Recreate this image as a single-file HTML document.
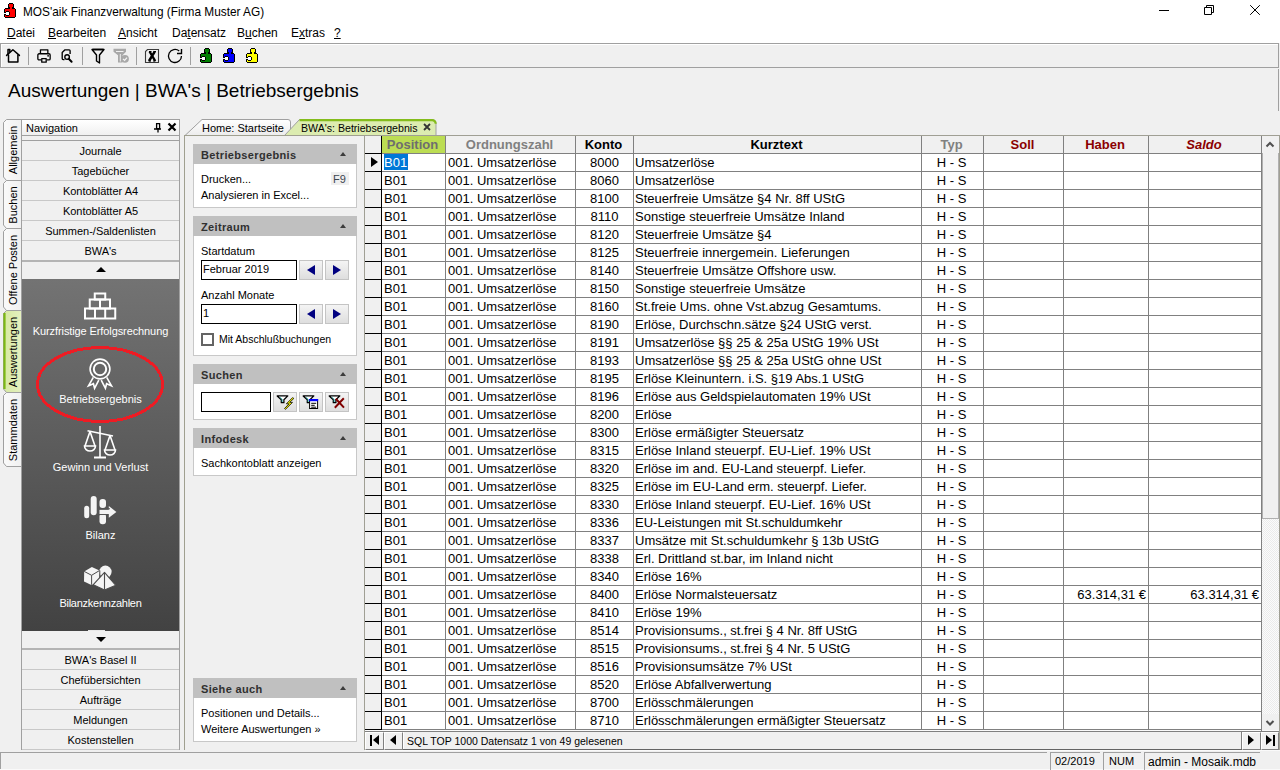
<!DOCTYPE html><html><head><meta charset="utf-8"><style>
*{margin:0;padding:0;box-sizing:border-box}
html,body{width:1280px;height:770px;overflow:hidden;background:#f0f0f0;font-family:"Liberation Sans",sans-serif;color:#000}
.a{position:absolute}
.t{position:absolute;white-space:nowrap;line-height:1}
.u{text-decoration:underline;text-underline-offset:1px}
.ni{position:absolute;left:22px;width:157px;height:20px;border-bottom:1px solid #c8c8c8;font-size:11px;text-align:center;line-height:21px;color:#000}
.lbl{position:absolute;left:22px;width:157px;text-align:center;font-size:11px;color:#fff;white-space:nowrap;line-height:1}
.tph{position:absolute;left:193px;width:164px;height:20px;background:#c0c0c0}
.tph b{position:absolute;left:8px;top:6px;font-size:11px;letter-spacing:0.35px;color:#303030;line-height:1}
.tph i{position:absolute;left:147px;top:8px;width:0;height:0;border-left:3px solid transparent;border-right:3px solid transparent;border-bottom:4px solid #3c3c3c}
.tpb{position:absolute;left:193px;width:164px;background:#fff;border:1px solid #c8c8c8;border-top:none}
.tpt{position:absolute;font-size:11px;white-space:nowrap;line-height:1;color:#000}
.inp{position:absolute;background:#fff;border:1px solid #000}
.btn{position:absolute;width:24px;height:20px;border:1px solid #c4c4c4;background:linear-gradient(#f4f4f4,#dedede)}
.gl{position:absolute;background:#808080}
.gt{position:absolute;font-size:13px;white-space:nowrap;line-height:1}
.gh{position:absolute;font-size:13px;font-weight:bold;white-space:nowrap;line-height:1;text-align:center}
.sp{position:absolute;top:752px;height:18px;border-left:1px solid #a0a0a0;border-top:1px solid #a0a0a0;font-size:12px;line-height:1;white-space:nowrap}
</style></head><body>
<div class="a" style="left:0;top:0;width:1280px;height:43px;background:#fff"></div>
<svg class="a" style="left:4px;top:3px" width="12" height="15" viewBox="0 0 12 15" shape-rendering="crispEdges"><rect x="5" y="0" width="4" height="1" fill="#000"/><rect x="4" y="1" width="1" height="1" fill="#000"/><rect x="5" y="1" width="4" height="1" fill="#f00"/><rect x="9" y="1" width="1" height="1" fill="#000"/><rect x="4" y="2" width="1" height="1" fill="#000"/><rect x="5" y="2" width="4" height="1" fill="#f00"/><rect x="9" y="2" width="1" height="1" fill="#000"/><rect x="4" y="3" width="1" height="1" fill="#000"/><rect x="5" y="3" width="4" height="1" fill="#f00"/><rect x="9" y="3" width="1" height="1" fill="#000"/><rect x="4" y="4" width="2" height="1" fill="#000"/><rect x="6" y="4" width="2" height="1" fill="#f00"/><rect x="8" y="4" width="2" height="1" fill="#000"/><rect x="1" y="5" width="5" height="1" fill="#000"/><rect x="6" y="5" width="2" height="1" fill="#f00"/><rect x="8" y="5" width="3" height="1" fill="#000"/><rect x="0" y="6" width="1" height="1" fill="#000"/><rect x="1" y="6" width="10" height="1" fill="#f00"/><rect x="11" y="6" width="1" height="1" fill="#000"/><rect x="0" y="7" width="1" height="1" fill="#000"/><rect x="1" y="7" width="10" height="1" fill="#f00"/><rect x="11" y="7" width="1" height="1" fill="#000"/><rect x="0" y="8" width="1" height="1" fill="#000"/><rect x="1" y="8" width="1" height="1" fill="#f00"/><rect x="2" y="8" width="3" height="1" fill="#000"/><rect x="5" y="8" width="6" height="1" fill="#f00"/><rect x="11" y="8" width="1" height="1" fill="#000"/><rect x="0" y="9" width="2" height="1" fill="#000"/><rect x="2" y="9" width="3" height="1" fill="#fff"/><rect x="5" y="9" width="1" height="1" fill="#000"/><rect x="6" y="9" width="5" height="1" fill="#f00"/><rect x="11" y="9" width="1" height="1" fill="#000"/><rect x="2" y="10" width="3" height="1" fill="#fff"/><rect x="5" y="10" width="1" height="1" fill="#000"/><rect x="6" y="10" width="5" height="1" fill="#f00"/><rect x="11" y="10" width="1" height="1" fill="#000"/><rect x="0" y="11" width="2" height="1" fill="#000"/><rect x="2" y="11" width="3" height="1" fill="#fff"/><rect x="5" y="11" width="1" height="1" fill="#000"/><rect x="6" y="11" width="5" height="1" fill="#f00"/><rect x="11" y="11" width="1" height="1" fill="#000"/><rect x="0" y="12" width="1" height="1" fill="#000"/><rect x="1" y="12" width="1" height="1" fill="#f00"/><rect x="2" y="12" width="3" height="1" fill="#000"/><rect x="5" y="12" width="6" height="1" fill="#f00"/><rect x="11" y="12" width="1" height="1" fill="#000"/><rect x="0" y="13" width="1" height="1" fill="#000"/><rect x="1" y="13" width="10" height="1" fill="#f00"/><rect x="11" y="13" width="1" height="1" fill="#000"/><rect x="1" y="14" width="10" height="1" fill="#000"/></svg>
<div class="t" style="left:23px;top:7px;font-size:11.85px;color:#000">MOS'aik Finanzverwaltung (Firma Muster AG)</div>
<div class="t" style="left:7px;top:27px;font-size:12px"><span class=u>D</span>atei</div>
<div class="t" style="left:48px;top:27px;font-size:12px"><span class=u>B</span>earbeiten</div>
<div class="t" style="left:118px;top:27px;font-size:12px"><span class=u>A</span>nsicht</div>
<div class="t" style="left:172px;top:27px;font-size:12px">Da<span class=u>t</span>ensatz</div>
<div class="t" style="left:237px;top:27px;font-size:12px">B<span class=u>u</span>chen</div>
<div class="t" style="left:291px;top:27px;font-size:12px">E<span class=u>x</span>tras</div>
<div class="t" style="left:334px;top:27px;font-size:12px"><span class=u>?</span></div>
<div class="a" style="left:1159px;top:10px;width:10px;height:1px;background:#000"></div>
<svg class="a" style="left:1202px;top:3px" width="14" height="14" viewBox="0 0 14 14"><path d="M2.5 4.5h7v7h-7z M4.5 4.5v-2h7v7h-2" fill="none" stroke="#000" stroke-width="1"/></svg>
<svg class="a" style="left:1248px;top:3px" width="14" height="14" viewBox="0 0 14 14"><path d="M2.2 2.2l9.6 9.6M11.8 2.2l-9.6 9.6" fill="none" stroke="#000" stroke-width="1"/></svg>
<div class="a" style="left:0;top:43px;width:1279px;height:25px;border:1px solid #a0a0a0;background:#f0f0f0;box-shadow:inset 1px 1px 0 #fff"></div>
<div class="a" style="left:1278px;top:69px;width:1px;height:42px;background:#a0a0a0"></div>
<div class="a" style="left:28px;top:47px;width:1px;height:18px;background:#a0a0a0"></div>
<div class="a" style="left:82px;top:47px;width:1px;height:18px;background:#a0a0a0"></div>
<div class="a" style="left:136px;top:47px;width:1px;height:18px;background:#a0a0a0"></div>
<div class="a" style="left:190px;top:47px;width:1px;height:18px;background:#a0a0a0"></div>
<svg class="a" style="left:5px;top:48px" width="17" height="16" viewBox="0 0 17 16"><g fill="none" stroke="#000" stroke-width="1.5" stroke-linejoin="round" stroke-linecap="round"><path d="M1.6 7.4L7.9 1.8L14.4 7.4"/><path d="M3.5 7v7h9.4v-7"/><path d="M3 6V1.4h1.8v2.1"/></g></svg>
<svg class="a" style="left:36px;top:48px" width="16" height="16" viewBox="0 0 16 16"><g fill="none" stroke="#000" stroke-width="1.3" stroke-linejoin="round"><path d="M4.45 5V1.85h7.4V5"/><path d="M5 11.85H3.05a1.2 1.2 0 0 1-1.2-1.2V6.95a1.2 1.2 0 0 1 1.2-1.2h9.9a1.2 1.2 0 0 1 1.2 1.2v3.7a1.2 1.2 0 0 1-1.2 1.2H11"/><path d="M5.75 10.6h4.45v3.6h-4.45z"/></g><circle cx="12.1" cy="7.8" r="0.9" fill="#000"/></svg>
<svg class="a" style="left:60px;top:48px" width="14" height="16" viewBox="0 0 14 16"><g fill="none" stroke="#000" stroke-width="1.35" stroke-linejoin="round"><path d="M4.5 11.6H3.2a1 1 0 0 1-1-1V4.6L5 1.8h4.1a1 1 0 0 1 1 1V6"/><circle cx="7.1" cy="9" r="2.3"/></g><path d="M8.7 10.8l2.9 2.9" stroke="#000" stroke-width="2" stroke-linecap="round"/></svg>
<svg class="a" style="left:91px;top:48px" width="14" height="16" viewBox="0 0 14 16"><path d="M1 1.5h12l-4.5 5.5v8l-3 -2v-6z" fill="none" stroke="#000" stroke-width="1.4" stroke-linejoin="round"/><path d="M1.5 1.5h11" stroke="#000" stroke-width="1.6"/></svg>
<svg class="a" style="left:113px;top:48px" width="17" height="16" viewBox="0 0 17 16"><path d="M0.5 0.8h12.5v3l-3.5 3.5v7.2h-4.5v-7.2l-4.5 -3.5z" fill="#a8a8a8"/><path d="M3 3.5h7.5M7.3 6v7.5" stroke="#f0f0f0" stroke-width="1"/><circle cx="12" cy="10.8" r="3.9" fill="#a8a8a8"/><path d="M10 10.8l1.6 1.6l2.4 -2.8" fill="none" stroke="#f4f4f4" stroke-width="1.2"/></svg>
<svg class="a" style="left:144px;top:48px" width="16" height="16" viewBox="0 0 16 16"><path d="M3.5 1.5h11v13h-13v-11z" fill="none" stroke="#3a3a3a" stroke-width="1.1"/><path d="M5 3.5h2.5M9.5 3.5h2.5M4.5 13h2.5M9 13h2.5" stroke="#000" stroke-width="1.1"/><path d="M5.6 3.5l5.6 9.5M10.8 3.5l-5.8 9.5" stroke="#000" stroke-width="2.4"/></svg>
<svg class="a" style="left:167px;top:48px" width="16" height="16" viewBox="0 0 16 16"><path d="M14.5 8a6.5 6.5 0 1 1 -2.3 -5" fill="none" stroke="#000" stroke-width="1.3"/><path d="M14.5 1v4.5h-4.5" fill="none" stroke="#000" stroke-width="1.4"/></svg>
<svg class="a" style="left:200px;top:48px" width="12" height="15" viewBox="0 0 12 15" shape-rendering="crispEdges"><rect x="5" y="0" width="4" height="1" fill="#000"/><rect x="4" y="1" width="1" height="1" fill="#000"/><rect x="5" y="1" width="4" height="1" fill="#008000"/><rect x="9" y="1" width="1" height="1" fill="#000"/><rect x="4" y="2" width="1" height="1" fill="#000"/><rect x="5" y="2" width="4" height="1" fill="#008000"/><rect x="9" y="2" width="1" height="1" fill="#000"/><rect x="4" y="3" width="1" height="1" fill="#000"/><rect x="5" y="3" width="4" height="1" fill="#008000"/><rect x="9" y="3" width="1" height="1" fill="#000"/><rect x="4" y="4" width="2" height="1" fill="#000"/><rect x="6" y="4" width="2" height="1" fill="#008000"/><rect x="8" y="4" width="2" height="1" fill="#000"/><rect x="1" y="5" width="5" height="1" fill="#000"/><rect x="6" y="5" width="2" height="1" fill="#008000"/><rect x="8" y="5" width="3" height="1" fill="#000"/><rect x="0" y="6" width="1" height="1" fill="#000"/><rect x="1" y="6" width="10" height="1" fill="#008000"/><rect x="11" y="6" width="1" height="1" fill="#000"/><rect x="0" y="7" width="1" height="1" fill="#000"/><rect x="1" y="7" width="10" height="1" fill="#008000"/><rect x="11" y="7" width="1" height="1" fill="#000"/><rect x="0" y="8" width="1" height="1" fill="#000"/><rect x="1" y="8" width="1" height="1" fill="#008000"/><rect x="2" y="8" width="3" height="1" fill="#000"/><rect x="5" y="8" width="6" height="1" fill="#008000"/><rect x="11" y="8" width="1" height="1" fill="#000"/><rect x="0" y="9" width="2" height="1" fill="#000"/><rect x="2" y="9" width="3" height="1" fill="#fff"/><rect x="5" y="9" width="1" height="1" fill="#000"/><rect x="6" y="9" width="5" height="1" fill="#008000"/><rect x="11" y="9" width="1" height="1" fill="#000"/><rect x="2" y="10" width="3" height="1" fill="#fff"/><rect x="5" y="10" width="1" height="1" fill="#000"/><rect x="6" y="10" width="5" height="1" fill="#008000"/><rect x="11" y="10" width="1" height="1" fill="#000"/><rect x="0" y="11" width="2" height="1" fill="#000"/><rect x="2" y="11" width="3" height="1" fill="#fff"/><rect x="5" y="11" width="1" height="1" fill="#000"/><rect x="6" y="11" width="5" height="1" fill="#008000"/><rect x="11" y="11" width="1" height="1" fill="#000"/><rect x="0" y="12" width="1" height="1" fill="#000"/><rect x="1" y="12" width="1" height="1" fill="#008000"/><rect x="2" y="12" width="3" height="1" fill="#000"/><rect x="5" y="12" width="6" height="1" fill="#008000"/><rect x="11" y="12" width="1" height="1" fill="#000"/><rect x="0" y="13" width="1" height="1" fill="#000"/><rect x="1" y="13" width="10" height="1" fill="#008000"/><rect x="11" y="13" width="1" height="1" fill="#000"/><rect x="1" y="14" width="10" height="1" fill="#000"/></svg>
<svg class="a" style="left:223px;top:48px" width="12" height="15" viewBox="0 0 12 15" shape-rendering="crispEdges"><rect x="5" y="0" width="4" height="1" fill="#000"/><rect x="4" y="1" width="1" height="1" fill="#000"/><rect x="5" y="1" width="4" height="1" fill="#0000ff"/><rect x="9" y="1" width="1" height="1" fill="#000"/><rect x="4" y="2" width="1" height="1" fill="#000"/><rect x="5" y="2" width="4" height="1" fill="#0000ff"/><rect x="9" y="2" width="1" height="1" fill="#000"/><rect x="4" y="3" width="1" height="1" fill="#000"/><rect x="5" y="3" width="4" height="1" fill="#0000ff"/><rect x="9" y="3" width="1" height="1" fill="#000"/><rect x="4" y="4" width="2" height="1" fill="#000"/><rect x="6" y="4" width="2" height="1" fill="#0000ff"/><rect x="8" y="4" width="2" height="1" fill="#000"/><rect x="1" y="5" width="5" height="1" fill="#000"/><rect x="6" y="5" width="2" height="1" fill="#0000ff"/><rect x="8" y="5" width="3" height="1" fill="#000"/><rect x="0" y="6" width="1" height="1" fill="#000"/><rect x="1" y="6" width="10" height="1" fill="#0000ff"/><rect x="11" y="6" width="1" height="1" fill="#000"/><rect x="0" y="7" width="1" height="1" fill="#000"/><rect x="1" y="7" width="10" height="1" fill="#0000ff"/><rect x="11" y="7" width="1" height="1" fill="#000"/><rect x="0" y="8" width="1" height="1" fill="#000"/><rect x="1" y="8" width="1" height="1" fill="#0000ff"/><rect x="2" y="8" width="3" height="1" fill="#000"/><rect x="5" y="8" width="6" height="1" fill="#0000ff"/><rect x="11" y="8" width="1" height="1" fill="#000"/><rect x="0" y="9" width="2" height="1" fill="#000"/><rect x="2" y="9" width="3" height="1" fill="#fff"/><rect x="5" y="9" width="1" height="1" fill="#000"/><rect x="6" y="9" width="5" height="1" fill="#0000ff"/><rect x="11" y="9" width="1" height="1" fill="#000"/><rect x="2" y="10" width="3" height="1" fill="#fff"/><rect x="5" y="10" width="1" height="1" fill="#000"/><rect x="6" y="10" width="5" height="1" fill="#0000ff"/><rect x="11" y="10" width="1" height="1" fill="#000"/><rect x="0" y="11" width="2" height="1" fill="#000"/><rect x="2" y="11" width="3" height="1" fill="#fff"/><rect x="5" y="11" width="1" height="1" fill="#000"/><rect x="6" y="11" width="5" height="1" fill="#0000ff"/><rect x="11" y="11" width="1" height="1" fill="#000"/><rect x="0" y="12" width="1" height="1" fill="#000"/><rect x="1" y="12" width="1" height="1" fill="#0000ff"/><rect x="2" y="12" width="3" height="1" fill="#000"/><rect x="5" y="12" width="6" height="1" fill="#0000ff"/><rect x="11" y="12" width="1" height="1" fill="#000"/><rect x="0" y="13" width="1" height="1" fill="#000"/><rect x="1" y="13" width="10" height="1" fill="#0000ff"/><rect x="11" y="13" width="1" height="1" fill="#000"/><rect x="1" y="14" width="10" height="1" fill="#000"/></svg>
<svg class="a" style="left:246px;top:48px" width="12" height="15" viewBox="0 0 12 15" shape-rendering="crispEdges"><rect x="5" y="0" width="4" height="1" fill="#000"/><rect x="4" y="1" width="1" height="1" fill="#000"/><rect x="5" y="1" width="4" height="1" fill="#ffff00"/><rect x="9" y="1" width="1" height="1" fill="#000"/><rect x="4" y="2" width="1" height="1" fill="#000"/><rect x="5" y="2" width="4" height="1" fill="#ffff00"/><rect x="9" y="2" width="1" height="1" fill="#000"/><rect x="4" y="3" width="1" height="1" fill="#000"/><rect x="5" y="3" width="4" height="1" fill="#ffff00"/><rect x="9" y="3" width="1" height="1" fill="#000"/><rect x="4" y="4" width="2" height="1" fill="#000"/><rect x="6" y="4" width="2" height="1" fill="#ffff00"/><rect x="8" y="4" width="2" height="1" fill="#000"/><rect x="1" y="5" width="5" height="1" fill="#000"/><rect x="6" y="5" width="2" height="1" fill="#ffff00"/><rect x="8" y="5" width="3" height="1" fill="#000"/><rect x="0" y="6" width="1" height="1" fill="#000"/><rect x="1" y="6" width="10" height="1" fill="#ffff00"/><rect x="11" y="6" width="1" height="1" fill="#000"/><rect x="0" y="7" width="1" height="1" fill="#000"/><rect x="1" y="7" width="10" height="1" fill="#ffff00"/><rect x="11" y="7" width="1" height="1" fill="#000"/><rect x="0" y="8" width="1" height="1" fill="#000"/><rect x="1" y="8" width="1" height="1" fill="#ffff00"/><rect x="2" y="8" width="3" height="1" fill="#000"/><rect x="5" y="8" width="6" height="1" fill="#ffff00"/><rect x="11" y="8" width="1" height="1" fill="#000"/><rect x="0" y="9" width="2" height="1" fill="#000"/><rect x="2" y="9" width="3" height="1" fill="#fff"/><rect x="5" y="9" width="1" height="1" fill="#000"/><rect x="6" y="9" width="5" height="1" fill="#ffff00"/><rect x="11" y="9" width="1" height="1" fill="#000"/><rect x="2" y="10" width="3" height="1" fill="#fff"/><rect x="5" y="10" width="1" height="1" fill="#000"/><rect x="6" y="10" width="5" height="1" fill="#ffff00"/><rect x="11" y="10" width="1" height="1" fill="#000"/><rect x="0" y="11" width="2" height="1" fill="#000"/><rect x="2" y="11" width="3" height="1" fill="#fff"/><rect x="5" y="11" width="1" height="1" fill="#000"/><rect x="6" y="11" width="5" height="1" fill="#ffff00"/><rect x="11" y="11" width="1" height="1" fill="#000"/><rect x="0" y="12" width="1" height="1" fill="#000"/><rect x="1" y="12" width="1" height="1" fill="#ffff00"/><rect x="2" y="12" width="3" height="1" fill="#000"/><rect x="5" y="12" width="6" height="1" fill="#ffff00"/><rect x="11" y="12" width="1" height="1" fill="#000"/><rect x="0" y="13" width="1" height="1" fill="#000"/><rect x="1" y="13" width="10" height="1" fill="#ffff00"/><rect x="11" y="13" width="1" height="1" fill="#000"/><rect x="1" y="14" width="10" height="1" fill="#000"/></svg>
<div class="t" style="left:8px;top:81px;font-size:19px">Auswertungen | BWA's | Betriebsergebnis</div>
<svg class="a" style="left:0;top:0" width="22" height="480" viewBox="0 0 22 480"><defs><linearGradient id="tg" x1="0" y1="0" x2="1" y2="0"><stop offset="0" stop-color="#fafafa"/><stop offset="1" stop-color="#f0f0f0"/></linearGradient><linearGradient id="ta" x1="0" y1="0" x2="1" y2="0"><stop offset="0" stop-color="#d6e9a0"/><stop offset="1" stop-color="#e4f0c0"/></linearGradient></defs><path d="M21.5 119.5H6.5L3.5 122.5V177L6.5 180.5H21.5z" fill="url(#tg)" stroke="#a0a0a0" stroke-width="1"/><path d="M21.5 180.5H6.5L3.5 183.5V225L6.5 228.5H21.5z" fill="url(#tg)" stroke="#a0a0a0" stroke-width="1"/><path d="M21.5 228.5H6.5L3.5 231.5V307L6.5 310.5H21.5z" fill="url(#tg)" stroke="#a0a0a0" stroke-width="1"/><path d="M21.5 310.5H6.5L3.5 313.5V389L6.5 392.5H21.5z" fill="url(#ta)" stroke="#a0a0a0" stroke-width="1"/><path d="M4.5 313V389" stroke="#7cb814" stroke-width="2.2"/><path d="M21.5 392.5H6.5L3.5 395.5V463L6.5 466.5H21.5z" fill="url(#tg)" stroke="#a0a0a0" stroke-width="1"/></svg>
<div class="t" style="left:12.5px;top:150.0px;font-size:11px;transform:translate(-50%,-50%) rotate(-90deg)">Allgemein</div>
<div class="t" style="left:12.5px;top:204.5px;font-size:11px;transform:translate(-50%,-50%) rotate(-90deg)">Buchen</div>
<div class="t" style="left:12.5px;top:269.5px;font-size:11px;transform:translate(-50%,-50%) rotate(-90deg)">Offene Posten</div>
<div class="t" style="left:12.5px;top:351.5px;font-size:11px;transform:translate(-50%,-50%) rotate(-90deg)">Auswertungen</div>
<div class="t" style="left:12.5px;top:429.5px;font-size:11px;transform:translate(-50%,-50%) rotate(-90deg)">Stammdaten</div>
<div class="a" style="left:21px;top:119px;width:159px;height:631px;border:1px solid #a0a0a0;background:#f0f0f0"></div>
<div class="a" style="left:22px;top:120px;width:157px;height:16px;background:linear-gradient(#fff,#f0f0f0);border-bottom:1px solid #a0a0a0"></div>
<div class="t" style="left:26px;top:123px;font-size:11px">Navigation</div>
<svg class="a" style="left:152px;top:122px" width="10" height="12" viewBox="0 0 10 12"><path d="M4.6 1.6h3v5h-3z" fill="none" stroke="#000" stroke-width="1.3"/><path d="M2 7h7M6 7v3.5" stroke="#000" stroke-width="1.3"/></svg>
<svg class="a" style="left:167px;top:122px" width="10" height="10" viewBox="0 0 10 10"><path d="M1.5 1.5l7 7M8.5 1.5l-7 7" stroke="#000" stroke-width="2.2"/></svg>
<div class="a" style="left:22px;top:140px;width:157px;height:1px;background:#a0a0a0"></div>
<div class="ni" style="top:141px">Journale</div>
<div class="ni" style="top:161px">Tagebücher</div>
<div class="ni" style="top:181px">Kontoblätter A4</div>
<div class="ni" style="top:201px">Kontoblätter A5</div>
<div class="ni" style="top:221px">Summen-/Saldenlisten</div>
<div class="ni" style="top:241px">BWA's</div>
<div class="a" style="left:22px;top:260px;width:157px;height:2px;background:#b4b4b4"></div>
<div class="a" style="left:22px;top:262px;width:157px;height:17px;background:#f0f0f0"></div>
<div class="a" style="left:96px;top:267px;width:0;height:0;border-left:5px solid transparent;border-right:5px solid transparent;border-bottom:5px solid #000"></div>
<div class="a" style="left:22px;top:279px;width:157px;height:352px;background:linear-gradient(#737373,#424242)"></div>
<svg class="a" style="left:83px;top:291px" width="35" height="30" viewBox="0 0 35 30"><g fill="none" stroke="#fff" stroke-width="2"><path d="M11.75 2.5h10.5v6.1h-10.5z"/><path d="M6.75 8.6h20.25v8.9h-20.25z"/><path d="M17 8.6v8.9"/><path d="M2 17.5h30.25v9.9h-30.25z"/><path d="M12 17.5v9.9M22.2 17.5v9.9"/></g></svg>
<div class="lbl" style="top:326px;letter-spacing:-0.1px">Kurzfristige Erfolgsrechnung</div>
<svg class="a" style="left:84px;top:355px" width="32" height="38" viewBox="0 0 32 38"><g fill="none" stroke="#fff"><circle cx="16" cy="14" r="9.9" stroke-width="1.6"/><circle cx="16" cy="14" r="6.2" stroke-width="2"/><path d="M9.3 22.3L4.5 30.9L9.4 28.7L10.6 33.2L14.8 25.2M22.7 22.3L27.5 30.9L22.6 28.7L21.4 33.2L17.2 25.2" stroke-width="1.6" stroke-linejoin="miter"/></g></svg>
<div class="lbl" style="top:394px">Betriebsergebnis</div>
<svg class="a" style="left:82px;top:424px" width="36" height="36" viewBox="0 0 36 36"><g fill="none" stroke="#fff" stroke-width="1.6"><path d="M18 2v31.5"/><path d="M12 33.5h12" stroke-width="2"/><path d="M5.5 6.7l25.5 5.3"/><path d="M8 7.5l-5 14.5M8 7.5l5 14.5"/><path d="M2.5 22a5.5 5 0 0 0 11 0z"/><path d="M28 11.5l-5 14.5M28 11.5l5 14.5"/><path d="M22.5 26a5.5 5 0 0 0 11 0z"/></g></svg>
<div class="lbl" style="top:462px">Gewinn und Verlust</div>
<svg class="a" style="left:82px;top:494px" width="36" height="32" viewBox="0 0 36 32"><g fill="#f4f4f4"><rect x="2.2" y="11.7" width="5" height="12.6" rx="2.5"/><rect x="8.7" y="2" width="6" height="19.2" rx="3"/><rect x="17.5" y="5" width="6.5" height="9" rx="3"/><rect x="17.5" y="19.5" width="6.5" height="10.8" rx="3"/><rect x="17.5" y="15.8" width="10" height="4.2"/><path d="M26.8 12l7.6 5.9l-7.6 5.9z"/></g><path d="M17 14.8h11M17 20.5h8" stroke="#555" stroke-width="1"/></svg>
<div class="lbl" style="top:530px">Bilanz</div>
<svg class="a" style="left:82px;top:564px" width="36" height="28" viewBox="0 0 36 28"><circle cx="23.4" cy="7.8" r="6.2" fill="#f4f4f4"/><path d="M2.2 7.4l7.65 -4.4l7.65 3.5v11.5l-8.1 3l-7.4 -3.4z" fill="#f4f4f4"/><path d="M2.2 7.4l7.4 3.9l7.9 -4.8M9.6 11.3v9.5M17.8 6.5v12" fill="none" stroke="#4c4c4c" stroke-width="1"/><path d="M22.5 8.4l-11.2 12.3l11.2 5.2l11.3 -4.6z" fill="#f4f4f4" stroke="#4c4c4c" stroke-width="1.1" stroke-linejoin="round"/><path d="M22.5 8.6v17.3" stroke="#4c4c4c" stroke-width="1.1"/></svg>
<div class="a" style="left:88px;top:630px;width:17px;height:1px;background:#e8e8e8"></div>
<div class="lbl" style="top:598px;letter-spacing:-0.25px">Bilanzkennzahlen</div>
<svg class="a" style="left:30px;top:340px" width="140" height="90" viewBox="0 0 140 90"><ellipse cx="70" cy="44.5" rx="62.5" ry="37" fill="none" stroke="#ed1c24" stroke-width="3" shape-rendering="crispEdges"/></svg>
<div class="a" style="left:22px;top:631px;width:157px;height:17px;background:#f0f0f0"></div>
<div class="a" style="left:96px;top:637px;width:0;height:0;border-left:5px solid transparent;border-right:5px solid transparent;border-top:5px solid #000"></div>
<div class="a" style="left:22px;top:648px;width:157px;height:2px;background:#b4b4b4"></div>
<div class="ni" style="top:650px">BWA's Basel II</div>
<div class="ni" style="top:670px">Chefübersichten</div>
<div class="ni" style="top:690px">Aufträge</div>
<div class="ni" style="top:710px">Meldungen</div>
<div class="ni" style="top:730px">Kostenstellen</div>
<svg class="a" style="left:180px;top:115px" width="270" height="22" viewBox="0 0 270 22"><defs><linearGradient id="hg" x1="0" y1="0" x2="0" y2="1"><stop offset="0" stop-color="#fff"/><stop offset="1" stop-color="#ececec"/></linearGradient></defs><path d="M5 20.5L22 4.5H108a2.5 2.5 0 0 1 2.5 2.5V20.5" fill="url(#hg)" stroke="#a0a0a0" stroke-width="1"/><path d="M104.5 20.5L119.5 4.5H252a4 4 0 0 1 4 4V20.5z" fill="#dcecb0" stroke="#a0a0a0" stroke-width="1"/><path d="M119.5 5.2H252a3.5 3.5 0 0 1 3.7 3.5" fill="none" stroke="#84bc1c" stroke-width="2.2"/></svg>
<div class="t" style="left:202px;top:123px;font-size:11px">Home: Startseite</div>
<div class="t" style="left:301px;top:123px;font-size:10.6px">BWA's: Betriebsergebnis</div>
<svg class="a" style="left:422px;top:122px" width="10" height="10" viewBox="0 0 10 10"><path d="M2 2l6 6M8 2l-6 6" stroke="#333" stroke-width="1.8"/></svg>
<div class="a" style="left:184px;top:135px;width:1096px;height:1px;background:#a0a090"></div>
<div class="a" style="left:184px;top:135px;width:1px;height:615px;background:#a0a090"></div>
<div class="tph" style="top:144px"><b>Betriebsergebnis</b><i></i></div>
<div class="tpb" style="top:164px;height:44px"></div>
<div class="tpt" style="left:201px;top:174px">Drucken...</div>
<div class="a" style="left:331px;top:172px;width:18px;height:13px;background:#efefef"></div>
<div class="tpt" style="left:333px;top:174px;color:#3c4650">F9</div>
<div class="tpt" style="left:201px;top:190px">Analysieren in Excel...</div>
<div class="tph" style="top:216px"><b>Zeitraum</b><i></i></div>
<div class="tpb" style="top:236px;height:120px"></div>
<div class="tpt" style="left:201px;top:246px">Startdatum</div>
<div class="inp" style="left:201px;top:260px;width:96px;height:20px"></div>
<div class="tpt" style="left:203px;top:264px">Februar 2019</div>
<div class="btn" style="left:299px;top:260px"></div>
<div class="a" style="left:307px;top:265px;width:0;height:0;border-top:5px solid transparent;border-bottom:5px solid transparent;border-right:8px solid #000080"></div>
<div class="btn" style="left:325px;top:260px"></div>
<div class="a" style="left:333px;top:265px;width:0;height:0;border-top:5px solid transparent;border-bottom:5px solid transparent;border-left:8px solid #000080"></div>
<div class="tpt" style="left:201px;top:290px">Anzahl Monate</div>
<div class="inp" style="left:201px;top:304px;width:96px;height:20px"></div>
<div class="tpt" style="left:203px;top:308px">1</div>
<div class="btn" style="left:299px;top:304px"></div>
<div class="a" style="left:307px;top:309px;width:0;height:0;border-top:5px solid transparent;border-bottom:5px solid transparent;border-right:8px solid #000080"></div>
<div class="btn" style="left:325px;top:304px"></div>
<div class="a" style="left:333px;top:309px;width:0;height:0;border-top:5px solid transparent;border-bottom:5px solid transparent;border-left:8px solid #000080"></div>
<div class="a" style="left:201px;top:333px;width:13px;height:13px;border:2px solid #646464;background:#fff"></div>
<div class="tpt" style="left:219px;top:334px;font-size:10.5px">Mit Abschlußbuchungen</div>
<div class="tph" style="top:364px"><b>Suchen</b><i></i></div>
<div class="tpb" style="top:384px;height:36px"></div>
<div class="inp" style="left:201px;top:392px;width:70px;height:20px"></div>
<div class="btn" style="left:273px;top:392px"></div>
<div class="btn" style="left:299px;top:392px"></div>
<div class="btn" style="left:325px;top:392px"></div>
<svg class="a" style="left:276px;top:395px" width="20" height="16" viewBox="0 0 20 16"><path d="M1.2 0.9h10.6l-3.9 3.8v3h-2.6v-3z" fill="#fff" stroke="#000" stroke-width="1.3" stroke-linejoin="round"/><path d="M4 2.2l2.2 2.3v2.5" stroke="#20b0b0" stroke-width="0.9" fill="none"/><path d="M16.6 2.6l1.2 0.9l-4.1 3.9h2.8l-7 6.9l-1-0.8l4.6 -4.7h-2.7z" fill="#ffff00" stroke="#000" stroke-width="0.8" stroke-linejoin="round"/></svg>
<svg class="a" style="left:302px;top:395px" width="20" height="16" viewBox="0 0 20 16"><path d="M1.2 0.9h10.6l-3.9 3.8v3h-2.6v-3z" fill="#fff" stroke="#000" stroke-width="1.3" stroke-linejoin="round"/><path d="M4 2.2l2.2 2.3v2.5" stroke="#20b0b0" stroke-width="0.9" fill="none"/><rect x="7.6" y="4.5" width="8" height="9" fill="#fff" stroke="#000" stroke-width="1"/><rect x="7.1" y="4" width="9" height="2.2" fill="#0000ff"/><path d="M9.2 8.3h5M9.2 10.3h3.5M9.2 12.2h5" stroke="#000" stroke-width="1"/></svg>
<svg class="a" style="left:328px;top:395px" width="20" height="16" viewBox="0 0 20 16"><path d="M1.2 0.9h10.6l-3.9 3.8v3h-2.6v-3z" fill="#fff" stroke="#000" stroke-width="1.3" stroke-linejoin="round"/><path d="M4 2.2l2.2 2.3v2.5" stroke="#20b0b0" stroke-width="0.9" fill="none"/><path d="M6.8 12.8l9 -9.5M7.8 3.8l8.2 8.8" stroke="#800000" stroke-width="2"/></svg>
<div class="tph" style="top:428px"><b>Infodesk</b><i></i></div>
<div class="tpb" style="top:448px;height:28px"></div>
<div class="tpt" style="left:201px;top:458px">Sachkontoblatt anzeigen</div>
<div class="tph" style="top:678px"><b>Siehe auch</b><i></i></div>
<div class="tpb" style="top:698px;height:44px"></div>
<div class="tpt" style="left:201px;top:708px">Positionen und Details...</div>
<div class="tpt" style="left:201px;top:724px">Weitere Auswertungen »</div>
<div class="a" style="left:364px;top:135px;width:916px;height:615px;background:#f0f0f0;border:1px solid #a09f94"></div>
<div class="a" style="left:382px;top:154px;width:879px;height:575px;background:#fff"></div>
<div class="a" style="left:382px;top:136px;width:63px;height:17px;background:#bcdd53"></div>
<div class="gl" style="left:445px;top:136px;width:1px;height:594px"></div>
<div class="gl" style="left:575px;top:136px;width:1px;height:594px"></div>
<div class="gl" style="left:633px;top:136px;width:1px;height:594px"></div>
<div class="gl" style="left:921px;top:136px;width:1px;height:594px"></div>
<div class="gl" style="left:983px;top:136px;width:1px;height:594px"></div>
<div class="gl" style="left:1063px;top:136px;width:1px;height:594px"></div>
<div class="gl" style="left:1148px;top:136px;width:1px;height:594px"></div>
<div class="gl" style="left:1261px;top:136px;width:1px;height:594px"></div>
<div class="gl" style="left:382px;top:153px;width:879px;height:1px"></div>
<div class="a" style="left:365px;top:153px;width:17px;height:1px;background:#000"></div>
<div class="gl" style="left:382px;top:171px;width:879px;height:1px"></div>
<div class="a" style="left:365px;top:171px;width:17px;height:1px;background:#000"></div>
<div class="gl" style="left:382px;top:189px;width:879px;height:1px"></div>
<div class="a" style="left:365px;top:189px;width:17px;height:1px;background:#000"></div>
<div class="gl" style="left:382px;top:207px;width:879px;height:1px"></div>
<div class="a" style="left:365px;top:207px;width:17px;height:1px;background:#000"></div>
<div class="gl" style="left:382px;top:225px;width:879px;height:1px"></div>
<div class="a" style="left:365px;top:225px;width:17px;height:1px;background:#000"></div>
<div class="gl" style="left:382px;top:243px;width:879px;height:1px"></div>
<div class="a" style="left:365px;top:243px;width:17px;height:1px;background:#000"></div>
<div class="gl" style="left:382px;top:261px;width:879px;height:1px"></div>
<div class="a" style="left:365px;top:261px;width:17px;height:1px;background:#000"></div>
<div class="gl" style="left:382px;top:279px;width:879px;height:1px"></div>
<div class="a" style="left:365px;top:279px;width:17px;height:1px;background:#000"></div>
<div class="gl" style="left:382px;top:297px;width:879px;height:1px"></div>
<div class="a" style="left:365px;top:297px;width:17px;height:1px;background:#000"></div>
<div class="gl" style="left:382px;top:315px;width:879px;height:1px"></div>
<div class="a" style="left:365px;top:315px;width:17px;height:1px;background:#000"></div>
<div class="gl" style="left:382px;top:333px;width:879px;height:1px"></div>
<div class="a" style="left:365px;top:333px;width:17px;height:1px;background:#000"></div>
<div class="gl" style="left:382px;top:351px;width:879px;height:1px"></div>
<div class="a" style="left:365px;top:351px;width:17px;height:1px;background:#000"></div>
<div class="gl" style="left:382px;top:369px;width:879px;height:1px"></div>
<div class="a" style="left:365px;top:369px;width:17px;height:1px;background:#000"></div>
<div class="gl" style="left:382px;top:387px;width:879px;height:1px"></div>
<div class="a" style="left:365px;top:387px;width:17px;height:1px;background:#000"></div>
<div class="gl" style="left:382px;top:405px;width:879px;height:1px"></div>
<div class="a" style="left:365px;top:405px;width:17px;height:1px;background:#000"></div>
<div class="gl" style="left:382px;top:423px;width:879px;height:1px"></div>
<div class="a" style="left:365px;top:423px;width:17px;height:1px;background:#000"></div>
<div class="gl" style="left:382px;top:441px;width:879px;height:1px"></div>
<div class="a" style="left:365px;top:441px;width:17px;height:1px;background:#000"></div>
<div class="gl" style="left:382px;top:459px;width:879px;height:1px"></div>
<div class="a" style="left:365px;top:459px;width:17px;height:1px;background:#000"></div>
<div class="gl" style="left:382px;top:477px;width:879px;height:1px"></div>
<div class="a" style="left:365px;top:477px;width:17px;height:1px;background:#000"></div>
<div class="gl" style="left:382px;top:495px;width:879px;height:1px"></div>
<div class="a" style="left:365px;top:495px;width:17px;height:1px;background:#000"></div>
<div class="gl" style="left:382px;top:513px;width:879px;height:1px"></div>
<div class="a" style="left:365px;top:513px;width:17px;height:1px;background:#000"></div>
<div class="gl" style="left:382px;top:531px;width:879px;height:1px"></div>
<div class="a" style="left:365px;top:531px;width:17px;height:1px;background:#000"></div>
<div class="gl" style="left:382px;top:549px;width:879px;height:1px"></div>
<div class="a" style="left:365px;top:549px;width:17px;height:1px;background:#000"></div>
<div class="gl" style="left:382px;top:567px;width:879px;height:1px"></div>
<div class="a" style="left:365px;top:567px;width:17px;height:1px;background:#000"></div>
<div class="gl" style="left:382px;top:585px;width:879px;height:1px"></div>
<div class="a" style="left:365px;top:585px;width:17px;height:1px;background:#000"></div>
<div class="gl" style="left:382px;top:603px;width:879px;height:1px"></div>
<div class="a" style="left:365px;top:603px;width:17px;height:1px;background:#000"></div>
<div class="gl" style="left:382px;top:621px;width:879px;height:1px"></div>
<div class="a" style="left:365px;top:621px;width:17px;height:1px;background:#000"></div>
<div class="gl" style="left:382px;top:639px;width:879px;height:1px"></div>
<div class="a" style="left:365px;top:639px;width:17px;height:1px;background:#000"></div>
<div class="gl" style="left:382px;top:657px;width:879px;height:1px"></div>
<div class="a" style="left:365px;top:657px;width:17px;height:1px;background:#000"></div>
<div class="gl" style="left:382px;top:675px;width:879px;height:1px"></div>
<div class="a" style="left:365px;top:675px;width:17px;height:1px;background:#000"></div>
<div class="gl" style="left:382px;top:693px;width:879px;height:1px"></div>
<div class="a" style="left:365px;top:693px;width:17px;height:1px;background:#000"></div>
<div class="gl" style="left:382px;top:711px;width:879px;height:1px"></div>
<div class="a" style="left:365px;top:711px;width:17px;height:1px;background:#000"></div>
<div class="gl" style="left:382px;top:729px;width:879px;height:1px"></div>
<div class="a" style="left:365px;top:729px;width:17px;height:1px;background:#000"></div>
<div class="a" style="left:381px;top:136px;width:1px;height:594px;background:#000"></div>
<div class="gh" style="left:381px;top:138px;width:63px;color:#6e6e6e;">Position</div>
<div class="gh" style="left:445px;top:138px;width:129px;color:#808080;">Ordnungszahl</div>
<div class="gh" style="left:575px;top:138px;width:57px;color:#000;">Konto</div>
<div class="gh" style="left:633px;top:138px;width:287px;color:#000;">Kurztext</div>
<div class="gh" style="left:921px;top:138px;width:61px;color:#808080;">Typ</div>
<div class="gh" style="left:983px;top:138px;width:79px;color:#8b0000;">Soll</div>
<div class="gh" style="left:1063px;top:138px;width:84px;color:#8b0000;">Haben</div>
<div class="gh" style="left:1148px;top:138px;width:112px;color:#8b0000;font-style:italic;">Saldo</div>
<div class="a" style="left:371px;top:157px;width:0;height:0;border-top:5.5px solid transparent;border-bottom:5.5px solid transparent;border-left:7px solid #000"></div>
<div class="a" style="left:384px;top:154px;width:24px;height:16px;background:#0078d7"></div>
<div class="gt" style="left:384px;top:156px;color:#fff">B01</div>
<div class="gt" style="left:448px;top:156px">001. Umsatzerlöse</div>
<div class="gt" style="left:576px;top:156px;width:57px;text-align:center">8000</div>
<div class="gt" style="left:635px;top:156px">Umsatzerlöse</div>
<div class="gt" style="left:921px;top:156px;width:61px;text-align:center">H - S</div>
<div class="gt" style="left:384px;top:174px;color:#000">B01</div>
<div class="gt" style="left:448px;top:174px">001. Umsatzerlöse</div>
<div class="gt" style="left:576px;top:174px;width:57px;text-align:center">8060</div>
<div class="gt" style="left:635px;top:174px">Umsatzerlöse</div>
<div class="gt" style="left:921px;top:174px;width:61px;text-align:center">H - S</div>
<div class="gt" style="left:384px;top:192px;color:#000">B01</div>
<div class="gt" style="left:448px;top:192px">001. Umsatzerlöse</div>
<div class="gt" style="left:576px;top:192px;width:57px;text-align:center">8100</div>
<div class="gt" style="left:635px;top:192px">Steuerfreie Umsätze §4 Nr. 8ff UStG</div>
<div class="gt" style="left:921px;top:192px;width:61px;text-align:center">H - S</div>
<div class="gt" style="left:384px;top:210px;color:#000">B01</div>
<div class="gt" style="left:448px;top:210px">001. Umsatzerlöse</div>
<div class="gt" style="left:576px;top:210px;width:57px;text-align:center">8110</div>
<div class="gt" style="left:635px;top:210px">Sonstige steuerfreie Umsätze Inland</div>
<div class="gt" style="left:921px;top:210px;width:61px;text-align:center">H - S</div>
<div class="gt" style="left:384px;top:228px;color:#000">B01</div>
<div class="gt" style="left:448px;top:228px">001. Umsatzerlöse</div>
<div class="gt" style="left:576px;top:228px;width:57px;text-align:center">8120</div>
<div class="gt" style="left:635px;top:228px">Steuerfreie Umsätze §4</div>
<div class="gt" style="left:921px;top:228px;width:61px;text-align:center">H - S</div>
<div class="gt" style="left:384px;top:246px;color:#000">B01</div>
<div class="gt" style="left:448px;top:246px">001. Umsatzerlöse</div>
<div class="gt" style="left:576px;top:246px;width:57px;text-align:center">8125</div>
<div class="gt" style="left:635px;top:246px">Steuerfreie innergemein. Lieferungen</div>
<div class="gt" style="left:921px;top:246px;width:61px;text-align:center">H - S</div>
<div class="gt" style="left:384px;top:264px;color:#000">B01</div>
<div class="gt" style="left:448px;top:264px">001. Umsatzerlöse</div>
<div class="gt" style="left:576px;top:264px;width:57px;text-align:center">8140</div>
<div class="gt" style="left:635px;top:264px">Steuerfreie Umsätze Offshore usw.</div>
<div class="gt" style="left:921px;top:264px;width:61px;text-align:center">H - S</div>
<div class="gt" style="left:384px;top:282px;color:#000">B01</div>
<div class="gt" style="left:448px;top:282px">001. Umsatzerlöse</div>
<div class="gt" style="left:576px;top:282px;width:57px;text-align:center">8150</div>
<div class="gt" style="left:635px;top:282px">Sonstige steuerfreie Umsätze</div>
<div class="gt" style="left:921px;top:282px;width:61px;text-align:center">H - S</div>
<div class="gt" style="left:384px;top:300px;color:#000">B01</div>
<div class="gt" style="left:448px;top:300px">001. Umsatzerlöse</div>
<div class="gt" style="left:576px;top:300px;width:57px;text-align:center">8160</div>
<div class="gt" style="left:635px;top:300px">St.freie Ums. ohne Vst.abzug Gesamtums.</div>
<div class="gt" style="left:921px;top:300px;width:61px;text-align:center">H - S</div>
<div class="gt" style="left:384px;top:318px;color:#000">B01</div>
<div class="gt" style="left:448px;top:318px">001. Umsatzerlöse</div>
<div class="gt" style="left:576px;top:318px;width:57px;text-align:center">8190</div>
<div class="gt" style="left:635px;top:318px">Erlöse, Durchschn.sätze §24 UStG verst.</div>
<div class="gt" style="left:921px;top:318px;width:61px;text-align:center">H - S</div>
<div class="gt" style="left:384px;top:336px;color:#000">B01</div>
<div class="gt" style="left:448px;top:336px">001. Umsatzerlöse</div>
<div class="gt" style="left:576px;top:336px;width:57px;text-align:center">8191</div>
<div class="gt" style="left:635px;top:336px">Umsatzerlöse §§ 25 &amp; 25a UStG 19% USt</div>
<div class="gt" style="left:921px;top:336px;width:61px;text-align:center">H - S</div>
<div class="gt" style="left:384px;top:354px;color:#000">B01</div>
<div class="gt" style="left:448px;top:354px">001. Umsatzerlöse</div>
<div class="gt" style="left:576px;top:354px;width:57px;text-align:center">8193</div>
<div class="gt" style="left:635px;top:354px">Umsatzerlöse §§ 25 &amp; 25a UStG ohne USt</div>
<div class="gt" style="left:921px;top:354px;width:61px;text-align:center">H - S</div>
<div class="gt" style="left:384px;top:372px;color:#000">B01</div>
<div class="gt" style="left:448px;top:372px">001. Umsatzerlöse</div>
<div class="gt" style="left:576px;top:372px;width:57px;text-align:center">8195</div>
<div class="gt" style="left:635px;top:372px">Erlöse Kleinuntern. i.S. §19 Abs.1 UStG</div>
<div class="gt" style="left:921px;top:372px;width:61px;text-align:center">H - S</div>
<div class="gt" style="left:384px;top:390px;color:#000">B01</div>
<div class="gt" style="left:448px;top:390px">001. Umsatzerlöse</div>
<div class="gt" style="left:576px;top:390px;width:57px;text-align:center">8196</div>
<div class="gt" style="left:635px;top:390px">Erlöse aus Geldspielautomaten 19% USt</div>
<div class="gt" style="left:921px;top:390px;width:61px;text-align:center">H - S</div>
<div class="gt" style="left:384px;top:408px;color:#000">B01</div>
<div class="gt" style="left:448px;top:408px">001. Umsatzerlöse</div>
<div class="gt" style="left:576px;top:408px;width:57px;text-align:center">8200</div>
<div class="gt" style="left:635px;top:408px">Erlöse</div>
<div class="gt" style="left:921px;top:408px;width:61px;text-align:center">H - S</div>
<div class="gt" style="left:384px;top:426px;color:#000">B01</div>
<div class="gt" style="left:448px;top:426px">001. Umsatzerlöse</div>
<div class="gt" style="left:576px;top:426px;width:57px;text-align:center">8300</div>
<div class="gt" style="left:635px;top:426px">Erlöse ermäßigter Steuersatz</div>
<div class="gt" style="left:921px;top:426px;width:61px;text-align:center">H - S</div>
<div class="gt" style="left:384px;top:444px;color:#000">B01</div>
<div class="gt" style="left:448px;top:444px">001. Umsatzerlöse</div>
<div class="gt" style="left:576px;top:444px;width:57px;text-align:center">8315</div>
<div class="gt" style="left:635px;top:444px">Erlöse Inland steuerpf. EU-Lief. 19% USt</div>
<div class="gt" style="left:921px;top:444px;width:61px;text-align:center">H - S</div>
<div class="gt" style="left:384px;top:462px;color:#000">B01</div>
<div class="gt" style="left:448px;top:462px">001. Umsatzerlöse</div>
<div class="gt" style="left:576px;top:462px;width:57px;text-align:center">8320</div>
<div class="gt" style="left:635px;top:462px">Erlöse im and. EU-Land steuerpf. Liefer.</div>
<div class="gt" style="left:921px;top:462px;width:61px;text-align:center">H - S</div>
<div class="gt" style="left:384px;top:480px;color:#000">B01</div>
<div class="gt" style="left:448px;top:480px">001. Umsatzerlöse</div>
<div class="gt" style="left:576px;top:480px;width:57px;text-align:center">8325</div>
<div class="gt" style="left:635px;top:480px">Erlöse im EU-Land erm. steuerpf. Liefer.</div>
<div class="gt" style="left:921px;top:480px;width:61px;text-align:center">H - S</div>
<div class="gt" style="left:384px;top:498px;color:#000">B01</div>
<div class="gt" style="left:448px;top:498px">001. Umsatzerlöse</div>
<div class="gt" style="left:576px;top:498px;width:57px;text-align:center">8330</div>
<div class="gt" style="left:635px;top:498px">Erlöse Inland steuerpf. EU-Lief. 16% USt</div>
<div class="gt" style="left:921px;top:498px;width:61px;text-align:center">H - S</div>
<div class="gt" style="left:384px;top:516px;color:#000">B01</div>
<div class="gt" style="left:448px;top:516px">001. Umsatzerlöse</div>
<div class="gt" style="left:576px;top:516px;width:57px;text-align:center">8336</div>
<div class="gt" style="left:635px;top:516px">EU-Leistungen mit St.schuldumkehr</div>
<div class="gt" style="left:921px;top:516px;width:61px;text-align:center">H - S</div>
<div class="gt" style="left:384px;top:534px;color:#000">B01</div>
<div class="gt" style="left:448px;top:534px">001. Umsatzerlöse</div>
<div class="gt" style="left:576px;top:534px;width:57px;text-align:center">8337</div>
<div class="gt" style="left:635px;top:534px">Umsätze mit St.schuldumkehr § 13b UStG</div>
<div class="gt" style="left:921px;top:534px;width:61px;text-align:center">H - S</div>
<div class="gt" style="left:384px;top:552px;color:#000">B01</div>
<div class="gt" style="left:448px;top:552px">001. Umsatzerlöse</div>
<div class="gt" style="left:576px;top:552px;width:57px;text-align:center">8338</div>
<div class="gt" style="left:635px;top:552px">Erl. Drittland st.bar, im Inland nicht</div>
<div class="gt" style="left:921px;top:552px;width:61px;text-align:center">H - S</div>
<div class="gt" style="left:384px;top:570px;color:#000">B01</div>
<div class="gt" style="left:448px;top:570px">001. Umsatzerlöse</div>
<div class="gt" style="left:576px;top:570px;width:57px;text-align:center">8340</div>
<div class="gt" style="left:635px;top:570px">Erlöse 16%</div>
<div class="gt" style="left:921px;top:570px;width:61px;text-align:center">H - S</div>
<div class="gt" style="left:384px;top:588px;color:#000">B01</div>
<div class="gt" style="left:448px;top:588px">001. Umsatzerlöse</div>
<div class="gt" style="left:576px;top:588px;width:57px;text-align:center">8400</div>
<div class="gt" style="left:635px;top:588px">Erlöse Normalsteuersatz</div>
<div class="gt" style="left:921px;top:588px;width:61px;text-align:center">H - S</div>
<div class="gt" style="left:1064px;top:588px;width:82px;text-align:right">63.314,31 €</div>
<div class="gt" style="left:1149px;top:588px;width:110px;text-align:right">63.314,31 €</div>
<div class="gt" style="left:384px;top:606px;color:#000">B01</div>
<div class="gt" style="left:448px;top:606px">001. Umsatzerlöse</div>
<div class="gt" style="left:576px;top:606px;width:57px;text-align:center">8410</div>
<div class="gt" style="left:635px;top:606px">Erlöse 19%</div>
<div class="gt" style="left:921px;top:606px;width:61px;text-align:center">H - S</div>
<div class="gt" style="left:384px;top:624px;color:#000">B01</div>
<div class="gt" style="left:448px;top:624px">001. Umsatzerlöse</div>
<div class="gt" style="left:576px;top:624px;width:57px;text-align:center">8514</div>
<div class="gt" style="left:635px;top:624px">Provisionsums., st.frei § 4 Nr. 8ff UStG</div>
<div class="gt" style="left:921px;top:624px;width:61px;text-align:center">H - S</div>
<div class="gt" style="left:384px;top:642px;color:#000">B01</div>
<div class="gt" style="left:448px;top:642px">001. Umsatzerlöse</div>
<div class="gt" style="left:576px;top:642px;width:57px;text-align:center">8515</div>
<div class="gt" style="left:635px;top:642px">Provisionsums., st.frei § 4 Nr. 5 UStG</div>
<div class="gt" style="left:921px;top:642px;width:61px;text-align:center">H - S</div>
<div class="gt" style="left:384px;top:660px;color:#000">B01</div>
<div class="gt" style="left:448px;top:660px">001. Umsatzerlöse</div>
<div class="gt" style="left:576px;top:660px;width:57px;text-align:center">8516</div>
<div class="gt" style="left:635px;top:660px">Provisionsumsätze 7% USt</div>
<div class="gt" style="left:921px;top:660px;width:61px;text-align:center">H - S</div>
<div class="gt" style="left:384px;top:678px;color:#000">B01</div>
<div class="gt" style="left:448px;top:678px">001. Umsatzerlöse</div>
<div class="gt" style="left:576px;top:678px;width:57px;text-align:center">8520</div>
<div class="gt" style="left:635px;top:678px">Erlöse Abfallverwertung</div>
<div class="gt" style="left:921px;top:678px;width:61px;text-align:center">H - S</div>
<div class="gt" style="left:384px;top:696px;color:#000">B01</div>
<div class="gt" style="left:448px;top:696px">001. Umsatzerlöse</div>
<div class="gt" style="left:576px;top:696px;width:57px;text-align:center">8700</div>
<div class="gt" style="left:635px;top:696px">Erlösschmälerungen</div>
<div class="gt" style="left:921px;top:696px;width:61px;text-align:center">H - S</div>
<div class="gt" style="left:384px;top:714px;color:#000">B01</div>
<div class="gt" style="left:448px;top:714px">001. Umsatzerlöse</div>
<div class="gt" style="left:576px;top:714px;width:57px;text-align:center">8710</div>
<div class="gt" style="left:635px;top:714px">Erlösschmälerungen ermäßigter Steuersatz</div>
<div class="gt" style="left:921px;top:714px;width:61px;text-align:center">H - S</div>
<div class="a" style="left:1262px;top:136px;width:17px;height:594px;background:repeating-conic-gradient(#fbfbfb 0 25%,#ebebeb 0 50%) 0 0/2px 2px"></div>
<div class="a" style="left:1262px;top:136px;width:17px;height:17px;background:#f0f0f0"></div>
<svg class="a" style="left:1265px;top:140px" width="10" height="10" viewBox="0 0 10 10"><path d="M1.5 6.5l3.5 -3.5l3.5 3.5" fill="none" stroke="#505050" stroke-width="2"/></svg>
<div class="a" style="left:1262px;top:153px;width:17px;height:366px;background:#f0f0f0;border:1px solid #b0b0b0;border-top:none"></div>
<div class="a" style="left:1262px;top:714px;width:17px;height:16px;background:#f0f0f0"></div>
<svg class="a" style="left:1265px;top:718px" width="10" height="10" viewBox="0 0 10 10"><path d="M1.5 3l3.5 3.5l3.5 -3.5" fill="none" stroke="#505050" stroke-width="2"/></svg>
<div class="a" style="left:365px;top:730px;width:914px;height:1px;background:#fafafa"></div>
<div class="a" style="left:365px;top:731px;width:914px;height:19px;background:#f0f0f0;border-top:1px solid #808080;border-bottom:1px solid #646464"></div>
<div class="a" style="left:365px;top:750px;width:915px;height:1px;background:#fafafa"></div>
<div class="a" style="left:365px;top:732px;width:19px;height:18px;border-left:1px solid #fff;border-top:1px solid #fff;border-right:1px solid #808080;border-bottom:1px solid #808080;background:#f0f0f0"></div>
<div class="a" style="left:384px;top:732px;width:19px;height:18px;border-left:1px solid #fff;border-top:1px solid #fff;border-right:1px solid #808080;border-bottom:1px solid #808080;background:#f0f0f0"></div>
<div class="a" style="left:1242px;top:732px;width:19px;height:18px;border-left:1px solid #fff;border-top:1px solid #fff;border-right:1px solid #808080;border-bottom:1px solid #808080;background:#f0f0f0"></div>
<div class="a" style="left:1261px;top:732px;width:18px;height:18px;border-left:1px solid #fff;border-top:1px solid #fff;border-right:1px solid #808080;border-bottom:1px solid #808080;background:#f0f0f0"></div>
<div class="a" style="left:1261px;top:729px;width:1px;height:2px;background:#808080"></div>
<div class="a" style="left:403px;top:732px;width:1px;height:17px;background:#fff"></div>
<div class="a" style="left:1241px;top:732px;width:1px;height:17px;background:#808080"></div>
<div class="a" style="left:370px;top:735px;width:2px;height:11px;background:#000"></div>
<div class="a" style="left:373px;top:735px;width:0;height:0;border-top:5.5px solid transparent;border-bottom:5.5px solid transparent;border-right:6px solid #000"></div>
<div class="a" style="left:390px;top:735px;width:0;height:0;border-top:5.5px solid transparent;border-bottom:5.5px solid transparent;border-right:6px solid #000"></div>
<div class="a" style="left:1248px;top:735px;width:0;height:0;border-top:5.5px solid transparent;border-bottom:5.5px solid transparent;border-left:6px solid #000"></div>
<div class="a" style="left:1266px;top:735px;width:0;height:0;border-top:5.5px solid transparent;border-bottom:5.5px solid transparent;border-left:6px solid #000"></div>
<div class="a" style="left:1273px;top:735px;width:2px;height:11px;background:#000"></div>
<div class="t" style="left:407px;top:736px;font-size:10.5px">SQL TOP 1000 Datensatz 1 von 49 gelesenen</div>
<div class="sp" style="left:0;width:1047px"></div>
<div class="a" style="left:0;top:769px;width:1280px;height:1px;background:#fafafa"></div>
<div class="sp" style="left:1050px;width:50px;padding:3px 0 0 4px;font-size:11px">02/2019</div>
<div class="sp" style="left:1103px;width:38px;padding:3px 0 0 5px;font-size:11px">NUM</div>
<div class="sp" style="left:1144px;width:116px;padding:3px 0 0 3px">admin - Mosaik.mdb</div>
</body></html>
